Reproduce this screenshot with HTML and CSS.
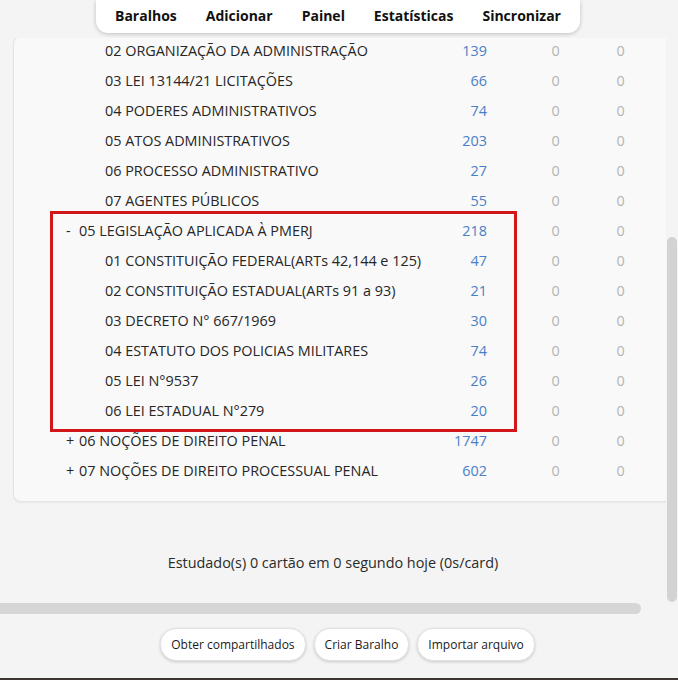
FILE: index.html
```html
<!DOCTYPE html>
<html lang="pt-BR">
<head>
  <meta charset="UTF-8" />
  <meta name="viewport" content="width=device-width, initial-scale=1.0"/>
  <title>Baralhos</title>
  <link rel="stylesheet" href="styles.css">
</head>
<body>

  <div class="header">
    <nav class="toolbar">
      <span>Baralhos</span>
      <span>Adicionar</span>
      <span>Painel</span>
      <span>Estatísticas</span>
      <span>Sincronizar</span>
    </nav>
  </div>

  <div class="main">
    <div class="decks">
      <div class="row"><div class="name sub">02 ORGANIZAÇÃO DA ADMINISTRAÇÃO</div><div class="count">139</div><div class="zero">0</div><div class="zero">0</div></div>
      <div class="row"><div class="name sub">03 LEI 13144/21 LICITAÇÕES</div><div class="count">66</div><div class="zero">0</div><div class="zero">0</div></div>
      <div class="row"><div class="name sub">04 PODERES ADMINISTRATIVOS</div><div class="count">74</div><div class="zero">0</div><div class="zero">0</div></div>
      <div class="row"><div class="name sub">05 ATOS ADMINISTRATIVOS</div><div class="count">203</div><div class="zero">0</div><div class="zero">0</div></div>
      <div class="row"><div class="name sub">06 PROCESSO ADMINISTRATIVO</div><div class="count">27</div><div class="zero">0</div><div class="zero">0</div></div>
      <div class="row"><div class="name sub">07 AGENTES PÚBLICOS</div><div class="count">55</div><div class="zero">0</div><div class="zero">0</div></div>
      <div class="row"><div class="name top"><span class="toggle">-</span>05 LEGISLAÇÃO APLICADA À PMERJ</div><div class="count">218</div><div class="zero">0</div><div class="zero">0</div></div>
      <div class="row"><div class="name sub">01 CONSTITUIÇÃO FEDERAL(ARTs 42,144 e 125)</div><div class="count">47</div><div class="zero">0</div><div class="zero">0</div></div>
      <div class="row"><div class="name sub">02 CONSTITUIÇÃO ESTADUAL(ARTs 91 a 93)</div><div class="count">21</div><div class="zero">0</div><div class="zero">0</div></div>
      <div class="row"><div class="name sub">03 DECRETO N° 667/1969</div><div class="count">30</div><div class="zero">0</div><div class="zero">0</div></div>
      <div class="row"><div class="name sub">04 ESTATUTO DOS POLICIAS MILITARES</div><div class="count">74</div><div class="zero">0</div><div class="zero">0</div></div>
      <div class="row"><div class="name sub">05 LEI N°9537</div><div class="count">26</div><div class="zero">0</div><div class="zero">0</div></div>
      <div class="row"><div class="name sub">06 LEI ESTADUAL N°279</div><div class="count">20</div><div class="zero">0</div><div class="zero">0</div></div>
      <div class="row"><div class="name top"><span class="toggle">+</span>06 NOÇÕES DE DIREITO PENAL</div><div class="count">1747</div><div class="zero">0</div><div class="zero">0</div></div>
      <div class="row"><div class="name top"><span class="toggle">+</span>07 NOÇÕES DE DIREITO PROCESSUAL PENAL</div><div class="count">602</div><div class="zero">0</div><div class="zero">0</div></div>
    </div>

    <p class="stats">Estudado(s) 0 cartão em 0 segundo hoje (0s/card)</p>
  </div>

  <div class="hscroll"></div>

  <div class="bottom-bar">
    <button class="pill">Obter compartilhados</button>
    <button class="pill">Criar Baralho</button>
    <button class="pill">Importar arquivo</button>
  </div>

  <div class="edge"></div>

  <!-- highlight box drawn over the list -->
  <div class="highlight"></div>
  <div class="vscroll"></div>

</body>
</html>
```

FILE: styles.css
```css
* {
  box-sizing: border-box;
}

html, body {
  overflow: hidden;
}

body {
  margin: 0;
  width: 678px;
  height: 680px;
  font-family: 'Open Sans', 'Noto Sans', sans-serif;
  font-size: 14.4px;
  background-color: #f4f4f4;
  color: #262626;
  display: flex;
  flex-direction: column;
  position: relative;
}

.header {
  height: 38px;
  display: flex;
  padding-left: 96px;
}

.toolbar {
  width: 484px;
  height: 33px;
  background: #fff;
  border-radius: 0 0 12px 12px;
  box-shadow: 0 1px 4px rgba(0, 0, 0, 0.22);
  display: flex;
  align-items: center;
  justify-content: space-between;
  padding: 0 19px 2px;
  font-weight: bold;
  font-size: 14px;
  color: #111;
}

.main {
  width: 666px;
  overflow: hidden;
}

.decks {
  width: 700px;
  margin-left: 13px;
  margin-top: -2px;
  padding-bottom: 14px;
  background: #f9f9f9;
  border: 1px solid #e4e4e4;
  border-right: none;
  border-radius: 8px 0 0 8px;
  box-shadow: 0 1px 2px rgba(0, 0, 0, 0.05);
}

.row {
  display: grid;
  grid-template-columns: 420px 90px 65px 65px;
  height: 30px;
  padding-bottom: 4px;
  align-items: center;
  margin-left: -1px;
}

.name {
  white-space: nowrap;
}

.name.sub {
  padding-left: 92px;
}

.name.top {
  padding-left: 53px;
}

.toggle {
  display: inline-block;
  width: 13px;
}

.count {
  text-align: right;
  padding-right: 36px;
  color: #4a80c8;
}

.zero {
  text-align: center;
  color: #b4b4b4;
}

.stats {
  margin: 51px 0 0;
  text-align: center;
  line-height: 20px;
  color: #2a2a2a;
}

.hscroll {
  width: 641px;
  height: 11px;
  margin-top: 30px;
  background: #d6d6d6;
  border-radius: 0 6px 6px 0;
}

.bottom-bar {
  display: flex;
  justify-content: center;
  gap: 8px;
  padding: 14px 0 0 17px;
}

.pill {
  height: 33px;
  padding: 0 10px;
  font-family: inherit;
  font-size: 12px;
  color: #1a1a1a;
  background: #fff;
  border: 1px solid #e2e2e2;
  border-radius: 16px;
  box-shadow: 0 1px 3px rgba(0, 0, 0, 0.18);
}

.edge {
  margin-top: auto;
  height: 2px;
  background: #3d3431;
}

.highlight {
  position: absolute;
  left: 50px;
  top: 211px;
  width: 467px;
  height: 221px;
  border: 3px solid #d2171b;
}

.vscroll {
  position: absolute;
  right: 1px;
  top: 237px;
  width: 10px;
  height: 365px;
  background: #d3d3d3;
  border-radius: 5px;
}
```
